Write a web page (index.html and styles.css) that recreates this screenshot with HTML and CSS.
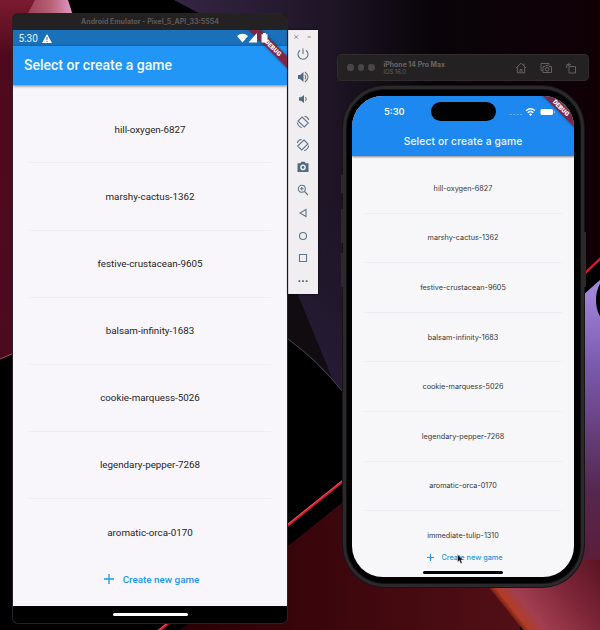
FILE: index.html
```html
<!DOCTYPE html>
<html lang="en">
<head>
<meta charset="utf-8">
<title>Select or create a game</title>
<link rel="stylesheet" href="styles.css">
</head>
<body>
<main class="desktop">
  <svg class="wallpaper" viewBox="0 0 600 630" aria-hidden="true">
    <defs>
      <linearGradient id="top" x1="0" y1="0" x2="1" y2="0"><stop offset="0" stop-color="#352544"/><stop offset=".38" stop-color="#1d1424"/><stop offset=".6" stop-color="#090409"/><stop offset="1" stop-color="#100006"/></linearGradient>
      <linearGradient id="left" x1="0" y1="0" x2="0" y2="1"><stop offset="0" stop-color="#7b1a30"/><stop offset=".15" stop-color="#50091c"/><stop offset="1" stop-color="#4c0a20"/></linearGradient>
      <linearGradient id="pink" x1="0" y1="0" x2="1" y2="0"><stop offset="0" stop-color="#7b1a30"/><stop offset=".6" stop-color="#b76075"/><stop offset=".9" stop-color="#e8a0d2"/><stop offset="1" stop-color="#8dafff"/></linearGradient>
      <linearGradient id="purple" x1="0" y1="0" x2="0" y2="1"><stop offset="0" stop-color="#a58be0"/><stop offset=".25" stop-color="#7959ac"/><stop offset=".6" stop-color="#55284f"/><stop offset="1" stop-color="#601425"/></linearGradient>
      <linearGradient id="floor" x1="0" y1="0" x2="1" y2="0"><stop offset="0" stop-color="#290004"/><stop offset="1" stop-color="#520f16"/></linearGradient>
      <linearGradient id="glow" gradientUnits="userSpaceOnUse" x1="500" y1="605" x2="582" y2="540"><stop offset="0" stop-color="#541014"/><stop offset=".07" stop-color="#b33c24"/><stop offset=".2" stop-color="#a13e50"/><stop offset=".55" stop-color="#80283a"/><stop offset="1" stop-color="#5d1425"/></linearGradient>
      <linearGradient id="slate" x1="0" y1="0" x2="0" y2="1"><stop offset="0" stop-color="#251b35" stop-opacity="0"/><stop offset="1" stop-color="#251b35"/></linearGradient>
    </defs>
    <rect width="600" height="630" fill="#000"/>
    <path d="M174 0H600V259L584 275H343V392L288 339V60Z" fill="url(#top)"/>
    <path d="M288 200H343V392L288 339Z" fill="url(#slate)"/>
    <path d="M288 280L298 295L332 378Q312 355 288 339Z" fill="#100c10"/>
    <path d="M288 339Q318 361 343 392V400H288Z" fill="#000"/>
    <path d="M288 339Q318 361 343 392" fill="none" stroke="#4b464b"/>
    <path d="M0 0H68L84 50H0Z" fill="url(#pink)"/>
    <path d="M0 0H35L14 40V353L0 359Z" fill="url(#left)"/>
    <path d="M0 359L14 353" stroke="#a14b5b"/>
    <path d="M180 630L288 546L343 502L520 450V630Z" fill="url(#floor)"/>
    <path d="M155 634L288 525L343 481" fill="none" stroke="#e2182c" stroke-width="2.6"/>
    <path d="M155 633L288 524L343 480" fill="none" stroke="#d58a91" stroke-width=".6"/>
    <path d="M582 276L602 257" stroke="#dc1a2b" stroke-width="2.4"/>
    <path d="M582 296L600 280V630H582Z" fill="url(#purple)"/>
    <ellipse cx="607" cy="300" rx="11" ry="21" fill="#000"/>
    <path d="M483 580L524 631H600V560H485Z" fill="url(#glow)"/>
  </svg>

  <section class="android">
    <header class="android-title">Android Emulator - Pixel_5_API_33:5554</header>
    <div class="android-screen">
      <div class="android-status">
        <span>5:30</span>
        <svg class="warn" viewBox="0 0 10 9"><path d="M5 0L10 9H0Z" fill="#fff"/><path d="M5 3V6M5 6.800V8" stroke="#1a6db3"/></svg>
        <svg class="signals" viewBox="0 0 32 10"><path d="M0 3Q5.500-1.500 11 3L5.500 9.500Z" fill="#fff"/><path d="M20 0V9.500H11.500Z" fill="#fff"/><path d="M26 0h3v1.300h1.500v8.200h-6V1.300H26Z" fill="#fff"/></svg>
      </div>
      <h1 class="android-bar">Select or create a game</h1>
      <div class="debug debug-android">DEBUG</div>
      <ul class="games android-games">
        <li>hill-oxygen-6827</li><li>marshy-cactus-1362</li><li>festive-crustacean-9605</li><li>balsam-infinity-1683</li><li>cookie-marquess-5026</li><li>legendary-pepper-7268</li><li>aromatic-orca-0170</li>
      </ul>
      <div class="create android-create"><svg viewBox="0 0 10 10"><path d="M5 0V10M0 5H10" stroke="currentColor" stroke-width="1.300"/></svg><span>Create new game</span></div>
    </div>
    <footer class="android-nav"><i></i></footer>
  </section>

  <aside class="tools">
    <div class="tools-head"><svg viewBox="0 0 20 6"><path d="M1.500 1.200L5 4.700M5 1.200L1.500 4.700M14.500 3H18" stroke="#777" stroke-width=".8"/></svg></div>
    <svg viewBox="0 0 14 14"><path d="M7 1.500V7M4 3.200A5 5 0 1 0 10 3.200"/></svg>
    <svg viewBox="0 0 14 14"><path class="solid" d="M2 5H4L7.500 2V12L4 9H2Z"/><path d="M9 4.800Q10.500 7 9 9.200M9 2Q15 7 9 12"/></svg>
    <svg viewBox="0 0 14 14"><path class="solid" d="M3 5.200H5L8 3V11L5 8.800H3Z"/><path d="M9.500 5Q11 7 9.500 9"/></svg>
    <svg viewBox="0 0 14 14"><path d="M6 2L12.300 8L8.300 12L2 6ZM1.300 7.500Q2 11.500 5.800 12.700M8.500 1.300Q12 2 12.700 5"/></svg>
    <svg viewBox="0 0 14 14"><path d="M8 2L1.700 8L5.700 12L12 6ZM12.700 7.500Q12 11.500 8.200 12.700M5.500 1.300Q2 2 1.300 5"/></svg>
    <svg viewBox="0 0 14 14"><path class="solid" fill-rule="evenodd" d="M1.500 3.200H4.300L5.300 1.800H8.700L9.700 3.200H12.500V12H1.500ZM7 4.600A2.800 2.800 0 1 0 7 10.200A2.800 2.800 0 1 0 7 4.600"/><circle class="solid" cx="7" cy="7.400" r="1.300"/></svg>
    <svg viewBox="0 0 14 14"><circle cx="5.800" cy="5.800" r="3.500"/><path d="M8.500 8.500L12 12M4 5.800H7.600M5.800 4V7.600"/></svg>
    <svg viewBox="0 0 14 14"><path d="M10 3.500V10.500L4 7Z"/></svg>
    <svg viewBox="0 0 14 14"><circle cx="7" cy="7" r="3.500"/></svg>
    <svg viewBox="0 0 14 14"><path d="M3.500 3.500H10.500V10.500H3.500Z"/></svg>
    <svg viewBox="0 0 14 14"><path class="solid" d="M2.500 6.200H4.300V8H2.500ZM6.100 6.200H7.900V8H6.100ZM9.700 6.200H11.500V8H9.700Z"/></svg>
  </aside>

  <section class="sim-bar">
    <div class="lights"><i></i><i></i><i></i></div>
    <div class="sim-name"><b>iPhone 14 Pro Max</b><span>iOS 16.0</span></div>
    <div class="sim-icons">
      <svg viewBox="0 0 12 12"><path d="M1 6L6 1.200L11 6M2.300 5V10.800H9.700V5M9 1.500V3.500M5 10.500V7.500H7V10.500"/></svg>
      <svg viewBox="0 0 12 12"><path d="M2.500 8.500H1V1.500H9V3M3 4.500H5L5.800 3.500H8.200L9 4.500H11.500V10.500H3Z"/><circle cx="7.200" cy="7.300" r="1.800"/></svg>
      <svg viewBox="0 0 12 12"><path d="M4 4.500H10.500V11H4ZM1.800 6V2.700H6M4.500 1L2.500 2.700L4.500 4.400"/></svg>
    </div>
  </section>

  <section class="iphone">
    <i class="key key-action"></i><i class="key key-up"></i><i class="key key-down"></i><i class="key key-power"></i>
    <div class="iphone-screen">
      <div class="ios-top">
        <div class="ios-status">
          <span>5:30</span><i class="island"></i>
          <svg viewBox="0 0 46 10"><path d="M0 7.500H12" stroke="#7ab8f8" stroke-width="1.200" stroke-dasharray="1.600 1.800"/><path d="M16 3.800Q20.500-.2 25 3.800M17.700 5.800Q20.500 3.400 23.300 5.800" fill="none" stroke="#fff" stroke-width="1.400"/><path d="M18.900 7.200Q20.500 6 22.100 7.200L20.500 9Z" fill="#fff"/><rect x="30.500" y="2" width="12.500" height="6" rx="1.500" fill="#fff"/><path d="M44.200 3.800V6.200" stroke="#a9d0fa"/></svg>
        </div>
        <h1>Select or create a game</h1>
      </div>
      <div class="debug debug-ios">DEBUG</div>
      <ul class="games ios-games">
        <li>hill-oxygen-6827</li><li>marshy-cactus-1362</li><li>festive-crustacean-9605</li><li>balsam-infinity-1683</li><li>cookie-marquess-5026</li><li>legendary-pepper-7268</li><li>aromatic-orca-0170</li><li>immediate-tulip-1310</li>
      </ul>
      <div class="create ios-create"><svg viewBox="0 0 10 10"><path d="M5 0V10M0 5H10" stroke="currentColor" stroke-width="1.700"/></svg><span>Create new game</span></div>
      <i class="home"></i>
    </div>
  </section>
  <svg class="cursor" viewBox="0 0 8 11"><path d="M.5.500V8L2.400 6.400L3.700 9.500L5.200 8.800L3.900 5.900H6.500Z" fill="#111" stroke="#ddd" stroke-width=".5"/></svg>
</main>
</body>
</html>
```
FILE: styles.css
```css
* { box-sizing: border-box; }
body { margin: 0; background: #000; }
h1, ul { margin: 0; padding: 0; }
ul { list-style: none; }
svg, i { display: block; }

.desktop { position: relative; width: 600px; height: 630px; overflow: hidden; font-family: Roboto, sans-serif; }
.wallpaper { width: 600px; height: 630px; }

/* Android emulator window */
.android { position: absolute; left: 13px; top: 14px; width: 274px; height: 609px; border-radius: 5px; background: #000; overflow: hidden; display: flex; flex-direction: column; box-shadow: 0 0 0 1px #29202a; }
.android-title { height: 16px; background: #242122; color: #5d595a; font: 700 7px/16px Inter, sans-serif; text-align: center; white-space: nowrap; }
.android-screen { position: relative; height: 576px; background: #f8f6fa; overflow: hidden; display: flex; flex-direction: column; }
.android-status { height: 16px; flex: none; background: #1a70b9; color: #e9f4fd; display: flex; align-items: center; padding: 0 18px 0 5.500px; font-size: 10px; }
.warn { width: 10px; height: 9px; margin-left: 4px; }
.signals { position: relative; z-index: 2; width: 32px; height: 10px; margin-left: auto; }
.android-bar { height: 39px; flex: none; background: #2196f6; color: #f0f8ff; padding-left: 11px; font: 500 14px/39px Roboto, sans-serif; box-shadow: 0 1px 3px #0008; white-space: nowrap; }
.games li { display: flex; align-items: center; justify-content: center; border-bottom: 1px solid #f0eef2; }
.games li:last-child { border-bottom: 0; }
.android-games { padding: 11.400px 16px 0; }
.android-games li { height: 67.100px; font-size: 9.800px; color: #252428; }
.create { display: flex; align-items: center; justify-content: center; color: #2196e9; font-weight: 500; }
.android-create { height: 20px; margin-top: 3px; padding-left: 3px; gap: 9px; font-size: 9.850px; }
.android-create svg { width: 10px; height: 10px; }
.android-nav { flex: 1; display: flex; align-items: center; justify-content: center; }
.android-nav i { width: 75px; height: 3px; border-radius: 2px; background: #fff; }

/* Diagonal ribbon over the screen corner */
.debug { position: absolute; z-index: 1; width: 80px; height: 8px; background: #7c2748; color: #fff; font: 900 6.300px/8px Roboto, sans-serif; text-align: center; transform: rotate(45deg); box-shadow: 0 0 3px #0007; }
.debug-android { left: 219.500px; top: 14px; }
.debug-ios { left: 169px; top: 8px; }

/* Emulator side controls */
.tools { position: absolute; left: 288px; top: 30px; width: 30px; height: 264px; background: #f0eef0; display: flex; flex-direction: column; align-items: center; padding-right: 2px; border-left: 1px solid #d3d0d4; box-shadow: 0 0 2px #000; }
.tools-head { height: 12.500px; padding-top: 4px; flex: none; }
.tools-head svg { width: 20px; height: 6px; }
.tools > svg { width: 14px; height: 14px; margin: 4.370px 0; flex: none; fill: none; stroke: #61778a; stroke-width: 1.100; }
.tools .solid { fill: #526b80; stroke: none; }

/* Simulator toolbar */
.sim-bar { position: absolute; left: 337px; top: 54px; width: 252px; height: 27px; border-radius: 5px; background: #242122; box-shadow: 0 0 0 1px #302c2e inset; display: flex; align-items: center; padding: 0 12px 0 10px; font-family: Inter, sans-serif; }
.lights { display: flex; gap: 4px; }
.lights i { width: 6.500px; height: 6.500px; border-radius: 50%; background: #494648; }
.sim-name { margin-left: 9px; display: flex; flex-direction: column; color: #696567; line-height: 7px; white-space: nowrap; }
.sim-name b { font-size: 6.900px; }
.sim-name span { font-size: 5.900px; color: #656163; }
.sim-icons { margin-left: auto; display: flex; gap: 13px; }
.sim-icons svg { width: 12px; height: 12px; fill: none; stroke: #6c686a; stroke-width: .9; }

/* iPhone */
.iphone { position: absolute; left: 343px; top: 86px; width: 241px; height: 501px; border-radius: 42px; background: #000; border: 3px solid #2b292c; box-shadow: 0 0 0 1px #161416, inset 0 0 0 1px #111012; padding: 7px 6px; }
.iphone-screen { position: relative; width: 222px; height: 481px; border-radius: 31px; overflow: hidden; background: #f7f6f9; font-family: Inter, sans-serif; }
.ios-top { height: 60px; background: #1e88f1; color: #eef7ff; box-shadow: 0 1px 2px #0007; }
.ios-status { height: 31px; display: grid; grid-template-columns: 79px 65px 1fr; align-items: center; font-size: 9.200px; font-weight: 600; }
.ios-status span { padding-left: 32px; }
.island { width: 65px; height: 19px; border-radius: 10px; background: #000; }
.ios-status svg { width: 46px; height: 10px; margin-left: 14px; }
.ios-top h1 { font: 500 10.300px/28px Inter, sans-serif; letter-spacing: .1px; text-align: center; white-space: nowrap; }
.ios-games { padding: 8px 12px 0; }
.ios-games li { height: 49.600px; font-size: 7.250px; color: #38363b; }
.ios-games li:last-child { height: 48px; }
.ios-create { position: absolute; left: 0; top: 454px; width: 222px; height: 14px; padding-left: 4px; gap: 7px; font-size: 7.300px; }
.ios-create svg { width: 7px; height: 7px; }
.home { position: absolute; left: 71px; top: 475px; width: 80px; height: 2.500px; border-radius: 2px; background: #000; }
.key { position: absolute; width: 2px; background: #2b292c; }
.key-action { left: -5px; top: 86px; height: 18px; }
.key-up { left: -5px; top: 120px; height: 34px; }
.key-down { left: -5px; top: 164px; height: 34px; }
.key-power { right: -5px; top: 143px; height: 55px; }
.cursor { position: absolute; left: 457px; top: 554px; width: 8px; height: 11px; }
```
